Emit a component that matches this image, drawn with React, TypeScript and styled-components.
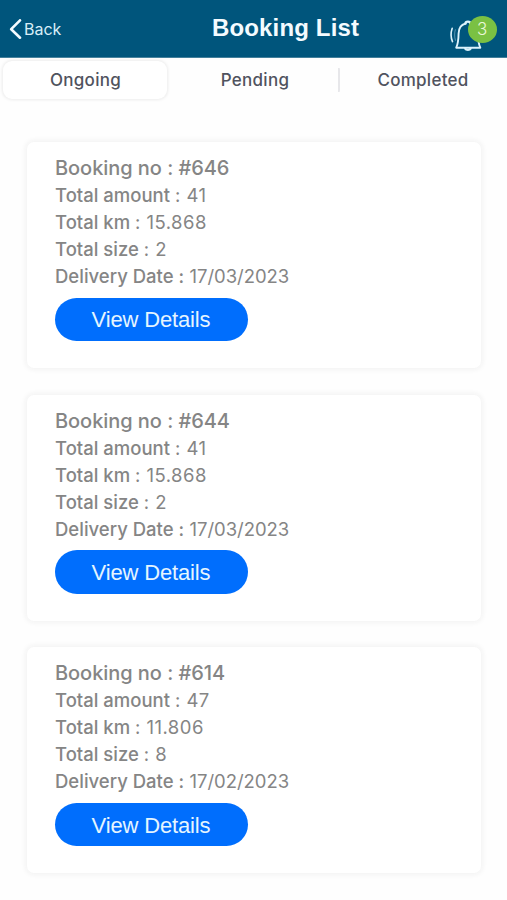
import React from "react";
import styled, { createGlobalStyle } from "styled-components";

const GlobalStyle = createGlobalStyle`
  * { box-sizing: border-box; }
  body { margin: 0; background: #fefefe; font-family: Inter, "Liberation Sans", sans-serif; }
`;

const Screen = styled.div`
  min-height: 900px;
  background: #fefefe;
`;

const Header = styled.header`
  display: grid;
  grid-template-columns: 212px 1fr 60px;
  align-items: center;
  height: 58px;
  background: #00557c;
  border-bottom: 1px solid #427f9b;
  color: #f4fbff;
`;

const BackButton = styled.button`
  display: flex;
  align-items: center;
  gap: 2px;
  height: 56px;
  padding: 0 0 1px 9px;
  border: 0;
  background: none;
  color: #d8eef8;
  font: 400 16px/20px Inter, sans-serif;
`;

const Title = styled.h1`
  margin: 0;
  padding-bottom: 2px;
  font: 700 24px/28px "Liberation Sans", sans-serif;
  letter-spacing: 0.15px;
  white-space: nowrap;
`;

const Notifications = styled.div`
  position: relative;
  width: 60px;
  height: 58px;
`;

const BellIcon = styled.svg`
  position: absolute;
  left: 0;
  top: 16px;
`;

const Badge = styled.span`
  position: absolute;
  left: 20.5px;
  top: 16px;
  width: 29.5px;
  height: 27px;
  border-radius: 50%;
  background: #7ac143;
  color: #e9f8d8;
  font-size: 17px;
  font-weight: 300;
  line-height: 27px;
  text-align: center;
`;

const Tabs = styled.nav`
  display: grid;
  grid-template-columns: 171px 169px 167px;
  height: 43px;
  padding-top: 3px;
`;

const Tab = styled.button<{ $active?: boolean; $divided?: boolean }>`
  display: flex;
  align-items: center;
  justify-content: center;
  height: 38px;
  margin: ${(p) => (p.$active ? "0 4px 0 3px" : "0")};
  padding: ${(p) => (p.$active ? "0 0 1px 1px" : "0 1px 1px 0")};
  border: 0;
  border-radius: 9px;
  background: ${(p) =>
    p.$divided
      ? "linear-gradient(#e7e7ea, #e7e7ea) right 7px / 2px 24px no-repeat"
      : p.$active ? "#fff" : "transparent"};
  box-shadow: ${(p) => (p.$active ? "0 0 3px 1px #ececec" : "none")};
  color: #50535e;
  font: 500 17px/20px Inter, sans-serif;
  letter-spacing: 0.27px;
`;

const List = styled.main`
  display: grid;
  gap: 26.7px;
  padding: 41px 26px 0 27px;
`;

const Card = styled.article`
  height: 226px;
  padding: 12px 28px 0;
  border-radius: 7px;
  background: #fff;
  box-shadow: 0 0 5px 2px #f3f3f3;
  color: #858585;
`;

const BookingNumber = styled.h2`
  margin: 0;
  font-size: 20px;
  line-height: 28px;
  font-weight: 500;
  letter-spacing: -0.05px;
`;

const Details = styled.dl`
  margin: 0;
`;

const Detail = styled.div`
  display: flex;
  gap: 5.5px;
  font-size: 18.5px;
  line-height: 27px;
`;

const Label = styled.dt`
  font-weight: 500;
`;

const Value = styled.dd<{ $spaced?: boolean }>`
  margin: 0;
  padding-left: ${(p) => (p.$spaced ? "0.7px" : "0")};
  letter-spacing: ${(p) => (p.$spaced ? "0.45px" : "-0.05px")};
`;

const Colon = styled.span<{ $light?: boolean }>`
  font-weight: ${(p) => (p.$light ? 400 : 500)};
`;

const ViewButton = styled.button`
  display: block;
  width: 193px;
  height: 43.5px;
  margin: 7.5px 0 0 -0.5px;
  padding: 2px 0 0;
  border: 0;
  border-radius: 22px;
  background: #006efd;
  color: #e5f5ff;
  font: 400 22px/26px "Liberation Sans", sans-serif;
  letter-spacing: -0.15px;
`;

const bookings = [
  { id: 646, amount: "41", km: "15.868", size: "2", date: "17/03/2023" },
  { id: 644, amount: "41", km: "15.868", size: "2", date: "17/03/2023" },
  { id: 614, amount: "47", km: "11.806", size: "8", date: "17/02/2023" },
];

function DetailRow({ label, value, light }: { label: string; value: string; light?: boolean }) {
  return (
    <Detail>
      <Label>{label} <Colon $light={light}>:</Colon></Label>
      <Value $spaced={light}>{value}</Value>
    </Detail>
  );
}

export default function App() {
  return (
    <Screen>
      <GlobalStyle />
      <Header>
        <BackButton>
          <svg width="13" height="20" viewBox="0 0 13 20" fill="none" stroke="#f4fbff" strokeWidth="2.6" strokeLinecap="round" strokeLinejoin="round">
            <path d="M11 1.3 2.200 10.200l8.800 8.500" />
          </svg>
          Back
        </BackButton>
        <Title>Booking List</Title>
        <Notifications>
          <BellIcon width="42" height="38" viewBox="0 0 42 38" fill="none" stroke="#dcf3fc" strokeWidth="1.9" strokeLinecap="round" strokeLinejoin="round">
            <path d="M18.500 7.500C14 8.700 11.700 12.700 11.600 17.500 11.500 24 11.200 27.500 9.200 31.700H33.300C31.300 27.500 31 24 30.900 17.500 30.800 12.700 28.500 8.700 23.500 7.500" />
            <path d="M18.500 7.500a2.400 1.900 0 0 1 4.800 0" strokeWidth="2.400" />
            <path d="M18.300 32.700c.8 1.500 4.400 1.500 5.200 0" strokeWidth="2.400" />
            <path d="M5.200 12.300c-1.500 4.300-1.400 9.400.3 13.300" strokeWidth="1.600" />
            <path d="M8.300 13.700c-1 3.400-.9 7.200.1 10.600" strokeWidth="0.800" opacity="0.5" />
          </BellIcon>
          <Badge>3</Badge>
        </Notifications>
      </Header>
      <Tabs>
        <Tab $active>Ongoing</Tab>
        <Tab $divided>Pending</Tab>
        <Tab>Completed</Tab>
      </Tabs>
      <List>
        {bookings.map((b) => (
          <Card key={b.id}>
            <BookingNumber>Booking no : #{b.id}</BookingNumber>
            <Details>
              <DetailRow label="Total amount" value={b.amount} light />
              <DetailRow label="Total km" value={b.km} light />
              <DetailRow label="Total size" value={b.size} light />
              <DetailRow label="Delivery Date" value={b.date} />
            </Details>
            <ViewButton>View Details</ViewButton>
          </Card>
        ))}
      </List>
    </Screen>
  );
}
